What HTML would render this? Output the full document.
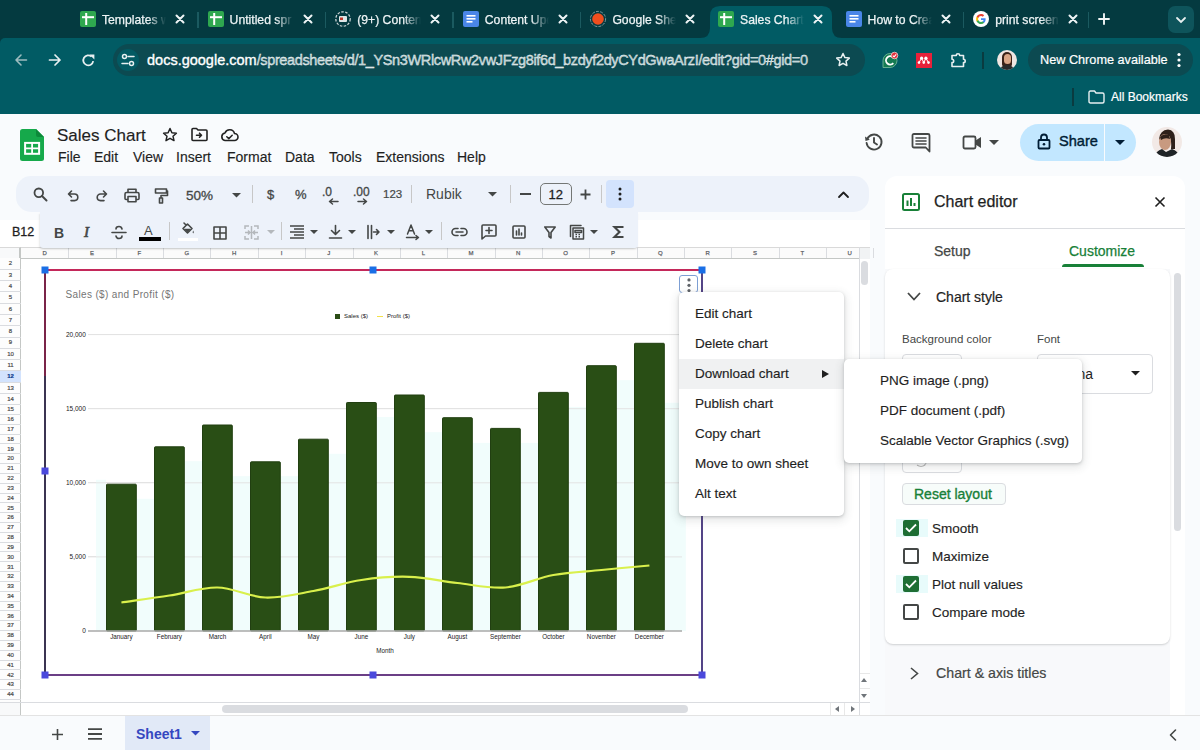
<!DOCTYPE html>
<html><head><meta charset="utf-8">
<style>
*{box-sizing:border-box;margin:0;padding:0}
html,body{width:1200px;height:750px;overflow:hidden;background:#f9fbfd;font-family:"Liberation Sans",sans-serif;}
body{position:relative}
.a{position:absolute}
.t{position:absolute;white-space:nowrap;line-height:1}
svg{position:absolute;overflow:visible}
#tabbar{left:0;top:0;width:1200px;height:50px;background:#043a40}
#toolbar{left:0;top:38px;width:1200px;height:76px;background:#015b64;border-top-left-radius:5px}
.tab{position:absolute;top:0;height:38px;width:128px}
.tab .lbl{position:absolute;left:32px;top:12.5px;font-size:12.2px;color:#eef4f5;width:64px;-webkit-text-stroke:0.25px #eef4f5;overflow:hidden;white-space:nowrap;
 -webkit-mask-image:linear-gradient(90deg,#000 72%,transparent 100%)}
.tab .ic{left:10px;top:11px;width:16px;height:16px}
.tab .cl{left:104px;top:13px;width:12px;height:12px}
.sep{position:absolute;top:12px;width:1.5px;height:16px;background:#1b5a60}
.ico{stroke:#e8f0f1;fill:none;stroke-width:1.8;stroke-linecap:round;stroke-linejoin:round}
.gi{stroke:#444746;fill:none;stroke-width:1.7;stroke-linecap:round;stroke-linejoin:round}
.menu{position:absolute;top:150px;font-size:14px;color:#1f1f1f;line-height:1;-webkit-text-stroke:0.15px #1f1f1f}
</style></head>
<body>
<div id="tabbar" class="a"></div>
<!-- active tab shape -->
<svg style="left:700px;top:6px;width:142px;height:32px" viewBox="0 0 142 32"><path d="M0 32 Q10 32 10 22 L10 10 Q10 0 20 0 L122 0 Q132 0 132 10 L132 22 Q132 32 142 32 Z" fill="#015b64"/></svg>
<div class="tab" style="left:70.0px">
<svg class="ic" viewBox="0 0 16 16"><rect x="0" y="0" width="16" height="16" rx="2" fill="#2fa84f"/><rect x="5.2" y="2" width="2" height="12" fill="#fff"/><rect x="2" y="5.2" width="12" height="2" fill="#fff"/></svg>
<div class="lbl">Templates w</div>
<svg class="cl" viewBox="0 0 12 12"><path d="M2.5 2.5L9.5 9.5M9.5 2.5L2.5 9.5" stroke="#eef4f5" stroke-width="2" stroke-linecap="round"/></svg>
</div>
<div class="sep" style="left:197.0px"></div>
<div class="tab" style="left:197.6px">
<svg class="ic" viewBox="0 0 16 16"><rect x="0" y="0" width="16" height="16" rx="2" fill="#2fa84f"/><rect x="5.2" y="2" width="2" height="12" fill="#fff"/><rect x="2" y="5.2" width="12" height="2" fill="#fff"/></svg>
<div class="lbl">Untitled spr</div>
<svg class="cl" viewBox="0 0 12 12"><path d="M2.5 2.5L9.5 9.5M9.5 2.5L2.5 9.5" stroke="#eef4f5" stroke-width="2" stroke-linecap="round"/></svg>
</div>
<div class="sep" style="left:324.6px"></div>
<div class="tab" style="left:325.2px">
<svg class="ic" viewBox="0 0 16 16"><circle cx="8" cy="8" r="7.2" fill="none" stroke="#c9d3d4" stroke-width="1.3" stroke-dasharray="2.5 1.5"/><rect x="4" y="5" width="8" height="6" rx="1" fill="#dfe6e7"/><rect x="5" y="6.5" width="3" height="2.5" fill="#c0392b"/></svg>
<div class="lbl">(9+) Content</div>
<svg class="cl" viewBox="0 0 12 12"><path d="M2.5 2.5L9.5 9.5M9.5 2.5L2.5 9.5" stroke="#eef4f5" stroke-width="2" stroke-linecap="round"/></svg>
</div>
<div class="sep" style="left:452.2px"></div>
<div class="tab" style="left:452.8px">
<svg class="ic" viewBox="0 0 16 16"><rect x="0" y="0" width="16" height="16" rx="2" fill="#4a86e8"/><rect x="3.5" y="4" width="9" height="1.6" fill="#fff"/><rect x="3.5" y="7" width="9" height="1.6" fill="#fff"/><rect x="3.5" y="10" width="6" height="1.6" fill="#fff"/></svg>
<div class="lbl">Content Upd</div>
<svg class="cl" viewBox="0 0 12 12"><path d="M2.5 2.5L9.5 9.5M9.5 2.5L2.5 9.5" stroke="#eef4f5" stroke-width="2" stroke-linecap="round"/></svg>
</div>
<div class="sep" style="left:579.8px"></div>
<div class="tab" style="left:580.4px">
<svg class="ic" viewBox="0 0 16 16"><circle cx="8" cy="8" r="7.6" fill="none" stroke="#8aa3a6" stroke-width="0.9" stroke-dasharray="3 1.2"/><circle cx="8" cy="8" r="5.8" fill="#f04e1e"/></svg>
<div class="lbl">Google Shee</div>
<svg class="cl" viewBox="0 0 12 12"><path d="M2.5 2.5L9.5 9.5M9.5 2.5L2.5 9.5" stroke="#eef4f5" stroke-width="2" stroke-linecap="round"/></svg>
</div>
<div class="tab" style="left:708.0px">
<svg class="ic" viewBox="0 0 16 16"><rect x="0" y="0" width="16" height="16" rx="2" fill="#2fa84f"/><rect x="5.2" y="2" width="2" height="12" fill="#fff"/><rect x="2" y="5.2" width="12" height="2" fill="#fff"/></svg>
<div class="lbl">Sales Chart</div>
<svg class="cl" viewBox="0 0 12 12"><path d="M2.5 2.5L9.5 9.5M9.5 2.5L2.5 9.5" stroke="#eef4f5" stroke-width="2" stroke-linecap="round"/></svg>
</div>
<div class="tab" style="left:835.6px">
<svg class="ic" viewBox="0 0 16 16"><rect x="0" y="0" width="16" height="16" rx="2" fill="#4a86e8"/><rect x="3.5" y="4" width="9" height="1.6" fill="#fff"/><rect x="3.5" y="7" width="9" height="1.6" fill="#fff"/><rect x="3.5" y="10" width="6" height="1.6" fill="#fff"/></svg>
<div class="lbl">How to Crea</div>
<svg class="cl" viewBox="0 0 12 12"><path d="M2.5 2.5L9.5 9.5M9.5 2.5L2.5 9.5" stroke="#eef4f5" stroke-width="2" stroke-linecap="round"/></svg>
</div>
<div class="sep" style="left:962.6px"></div>
<div class="tab" style="left:963.2px">
<svg class="ic" viewBox="0 0 16 16"><circle cx="8" cy="8" r="8" fill="#fff"/><path d="M12.6 8.2c0-.4 0-.7-.1-1H8v1.9h2.6c-.1.6-.5 1.2-1 1.5v1.2h1.6c1-.9 1.4-2.2 1.4-3.6z" fill="#4285f4"/><path d="M8 13c1.3 0 2.4-.4 3.2-1.2l-1.6-1.2c-.4.3-1 .5-1.6.5-1.3 0-2.3-.8-2.7-2H3.7v1.3C4.5 11.9 6.1 13 8 13z" fill="#34a853"/><path d="M5.3 9.1c-.1-.3-.2-.7-.2-1.1s.1-.7.2-1.1V5.6H3.7C3.3 6.3 3.1 7.1 3.1 8s.2 1.7.6 2.4l1.6-1.3z" fill="#fbbc05"/><path d="M8 5c.7 0 1.3.2 1.8.7l1.4-1.4C10.4 3.5 9.3 3 8 3 6.1 3 4.5 4.1 3.7 5.6l1.6 1.3C5.7 5.8 6.7 5 8 5z" fill="#ea4335"/></svg>
<div class="lbl">print screen</div>
<svg class="cl" viewBox="0 0 12 12"><path d="M2.5 2.5L9.5 9.5M9.5 2.5L2.5 9.5" stroke="#eef4f5" stroke-width="2" stroke-linecap="round"/></svg>
</div>
<div class="sep" style="left:1087.5px"></div>
<svg style="left:1098px;top:13px;width:12px;height:12px" viewBox="0 0 12 12"><path d="M6 1V11M1 6H11" stroke="#f0f5f5" stroke-width="1.9" stroke-linecap="round"/></svg>
<div class="a" style="left:1168px;top:6px;width:26px;height:27px;border-radius:7px;background:#0e545b"></div>
<svg style="left:1175px;top:16px;width:12px;height:8px" viewBox="0 0 12 8"><path d="M2 2L6 6L10 2" stroke="#e8f0f1" stroke-width="1.8" fill="none" stroke-linecap="round"/></svg>

<div id="toolbar" class="a"></div>
<!-- nav icons -->
<svg style="left:15px;top:54px;width:12px;height:12px" viewBox="0 0 12 12"><path class="ico" style="stroke:#9dbcbf;stroke-width:1.6" d="M11.5 6H1M6 1L1 6L6 11"/></svg>
<svg style="left:48.5px;top:54px;width:12px;height:12px" viewBox="0 0 12 12"><path class="ico" style="stroke-width:1.7" d="M0.5 6H11M6 1L11 6L6 11"/></svg>
<svg style="left:82px;top:54px;width:13px;height:13px" viewBox="0 0 13 13"><path class="ico" style="stroke-width:1.8;stroke-linecap:butt" d="M11.2 7.2A5 5 0 1 1 9.6 2.6"/><path d="M7.4 0.6H12.4V5.6Z" fill="#e8f0f1"/></svg>
<!-- address bar -->
<div class="a" style="left:113px;top:44px;width:752px;height:32px;border-radius:16px;background:#0c4a51"></div>
<div class="a" style="left:117px;top:49px;width:22px;height:22px;border-radius:11px;background:#035a63"></div>
<svg style="left:121px;top:53px;width:14px;height:14px" viewBox="0 0 14 14"><circle cx="3.5" cy="3.5" r="2" class="ico" style="stroke-width:1.5"/><path d="M7 3.5H13" class="ico" style="stroke-width:1.5"/><circle cx="10.5" cy="10.5" r="2" class="ico" style="stroke-width:1.5"/><path d="M1 10.5H7" class="ico" style="stroke-width:1.5"/></svg>
<div class="t" style="left:147px;top:53px;font-size:14.5px;color:#ffffff;-webkit-text-stroke:0.35px #fff">docs.google.com<span style="color:#a9c3c6;letter-spacing:-0.36px">/spreadsheets/d/1_YSn3WRlcwRw2vwJFzg8if6d_bzdyf2dyCYdGwaArzI/edit?gid=0#gid=0</span></div>
<svg style="left:835px;top:52px;width:16px;height:16px" viewBox="0 0 16 16"><path class="ico" style="stroke-width:1.5" d="M8 1.5L9.9 5.6L14.3 6.1L11 9.1L11.9 13.5L8 11.3L4.1 13.5L5 9.1L1.7 6.1L6.1 5.6Z"/></svg>
<!-- extension icons -->
<svg style="left:881px;top:51px;width:18px;height:18px" viewBox="0 0 18 18"><path d="M9 2.5A7 7 0 0 1 9 16.5H2V9.5A7 7 0 0 1 9 2.5Z" fill="#157a52" stroke="#6fb596" stroke-width="0.9"/><path d="M12 6.2A4.2 4.2 0 1 0 12.3 12.2" fill="none" stroke="#fff" stroke-width="1.9"/><circle cx="13.5" cy="4.5" r="3.3" fill="#e22f3d" stroke="#f6d0d3" stroke-width="0.8"/><path d="M11.8 4.6L13.1 5.8L15.2 3.4" stroke="#fff" stroke-width="1.1" fill="none"/></svg>
<div class="a" style="left:916px;top:52.5px;width:15.5px;height:15px;background:#e8213a"></div>
<svg style="left:916px;top:52.5px;width:15.5px;height:15px" viewBox="0 0 15.5 15"><circle cx="5.6" cy="5.2" r="1.6" fill="#fff"/><circle cx="9.9" cy="5.2" r="1.6" fill="#fff"/><circle cx="3" cy="9.6" r="1.3" fill="#fff"/><circle cx="7.75" cy="9.6" r="1.3" fill="#fff"/><circle cx="12.5" cy="9.6" r="1.3" fill="#fff"/><path d="M3 9.6L5.6 5.2L7.75 9.6L9.9 5.2L12.5 9.6" stroke="#fff" stroke-width="1" fill="none"/></svg>
<svg style="left:950px;top:51.5px;width:16px;height:16px" viewBox="0 0 16 16"><path class="ico" style="stroke-width:1.6" d="M2 3.5H6.3A1.7 1.7 0 0 1 9.7 3.5H13.5V7.2A1.7 1.7 0 0 1 13.5 10.6V14.5H2V10.6A1.7 1.7 0 0 0 2 7.2Z"/></svg>
<div class="a" style="left:982px;top:52px;width:1.5px;height:17px;background:#0a3b40"></div>
<div class="a" style="left:997px;top:50px;width:20px;height:20px;border-radius:10px;overflow:hidden;background:#efe6e2">
 <div class="a" style="left:5px;top:2px;width:10px;height:15px;border-radius:5px 5px 3px 3px;background:#3a2218"></div>
 <div class="a" style="left:6.5px;top:4px;width:7px;height:10px;border-radius:4px;background:#d9a585"></div>
 <div class="a" style="left:3px;top:15px;width:14px;height:8px;border-radius:6px 6px 0 0;background:#2a2a2a"></div>
</div>
<div class="a" style="left:1028px;top:44px;width:165px;height:32px;border-radius:16px;background:#0c4a51"></div>
<div class="t" style="left:1040px;top:54px;font-size:12.7px;color:#fff;-webkit-text-stroke:0.2px #fff">New Chrome available</div>
<svg style="left:1176px;top:52px;width:6px;height:16px" viewBox="0 0 6 16"><circle cx="3" cy="2.5" r="1.6" fill="#fff"/><circle cx="3" cy="8" r="1.6" fill="#fff"/><circle cx="3" cy="13.5" r="1.6" fill="#fff"/></svg>
<!-- bookmarks -->
<div class="a" style="left:1072px;top:88px;width:1.5px;height:18px;background:#0a3b40"></div>
<svg style="left:1088px;top:90px;width:17px;height:14px" viewBox="0 0 17 14"><path d="M1 2.5Q1 1 2.5 1H6.5L8 3H14.5Q16 3 16 4.5V11.5Q16 13 14.5 13H2.5Q1 13 1 11.5Z" class="ico" style="stroke-width:1.4"/></svg>
<div class="t" style="left:1111px;top:91px;font-size:12px;color:#fff;-webkit-text-stroke:0.2px #fff">All Bookmarks</div>

<!-- ===== Sheets header ===== -->
<svg style="left:20px;top:129px;width:24px;height:32px" viewBox="0 0 24 32"><path d="M2.5 0H16L24 8V29.5Q24 32 21.5 32H2.5Q0 32 0 29.5V2.5Q0 0 2.5 0Z" fill="#16a94b"/><path d="M16 0L24 8H18Q16 8 16 6Z" fill="#0c8a3a"/><rect x="5.1" y="13.9" width="14" height="10.9" fill="none" stroke="#fff" stroke-width="2"/><path d="M5 19.35H19M12.1 14V24.8" stroke="#fff" stroke-width="1.8"/></svg>
<div class="t" style="left:57px;top:126.5px;font-size:17px;color:#1f1f1f;-webkit-text-stroke:0.15px #1f1f1f">Sales Chart</div>
<svg style="left:161px;top:126px;width:18px;height:18px" viewBox="0 0 18 18"><path class="gi" style="stroke-width:1.5;stroke:#222" d="M9 2.5L10.9 6.8L15.4 7.2L12 10.2L13 14.6L9 12.3L5 14.6L6 10.2L2.6 7.2L7.1 6.8Z"/></svg>
<svg style="left:191px;top:127px;width:17px;height:15px" viewBox="0 0 17 15"><path class="gi" style="stroke-width:1.6;stroke:#222" d="M1 2.5Q1 1.5 2 1.5H5.5L7 3H15Q16 3 16 4V12.5Q16 13.5 15 13.5H2Q1 13.5 1 12.5Z"/><path class="gi" style="stroke-width:1.6;stroke:#222" d="M5.5 8.2H10.5M8.5 6.2L10.5 8.2L8.5 10.2"/></svg>
<svg style="left:220px;top:128px;width:19px;height:14px" viewBox="0 0 19 14"><path class="gi" style="stroke-width:1.6;stroke:#222" d="M5 12.5H14.5A3.5 3.5 0 0 0 14.5 5.5A5 5 0 0 0 5 5A3.8 3.8 0 0 0 5 12.5Z"/><path class="gi" style="stroke-width:1.5;stroke:#222" d="M6.8 8.8L8.8 10.6L12.2 7.2"/></svg>
<div class="menu" style="left:58px">File</div>
<div class="menu" style="left:94px">Edit</div>
<div class="menu" style="left:133px">View</div>
<div class="menu" style="left:176px">Insert</div>
<div class="menu" style="left:227px">Format</div>
<div class="menu" style="left:285px">Data</div>
<div class="menu" style="left:329px">Tools</div>
<div class="menu" style="left:376px">Extensions</div>
<div class="menu" style="left:457px">Help</div>

<svg style="left:864px;top:132px;width:20px;height:20px" viewBox="0 0 20 20"><path class="gi" style="stroke-width:1.9" d="M3.2 7A7.5 7.5 0 1 1 2.6 11"/><path d="M1 4.5L1.5 9L5.8 7.8Z" fill="#444746"/><path class="gi" style="stroke-width:1.9" d="M10 6V10.5L13 12.5"/></svg>
<svg style="left:911px;top:133px;width:20px;height:20px" viewBox="0 0 20 20"><path class="gi" style="stroke-width:1.8" d="M3 1H17Q18.5 1 18.5 2.5V18.5L14.8 14.5H3Q1.5 14.5 1.5 13V2.5Q1.5 1 3 1Z"/><path class="gi" style="stroke-width:1.6" d="M5 5H15M5 8H15M5 11H15"/></svg>
<svg style="left:962px;top:135px;width:20px;height:15px" viewBox="0 0 20 15"><path class="gi" style="stroke-width:1.8" d="M1.5 3Q1.5 1.5 3 1.5H12Q13.5 1.5 13.5 3V12Q13.5 13.5 12 13.5H3Q1.5 13.5 1.5 12Z"/><path d="M13.5 5.5L19 2V13L13.5 9.5Z" fill="#444746"/></svg>
<svg style="left:989px;top:140px;width:10px;height:5px" viewBox="0 0 10 5"><path d="M0 0H10L5 5Z" fill="#444746"/></svg>
<div class="a" style="left:1020px;top:124px;width:116px;height:37px;border-radius:18.5px;background:#c2e7ff"></div>
<div class="a" style="left:1104px;top:124px;width:1px;height:37px;background:#f9fbfd"></div>
<svg style="left:1037px;top:133px;width:14px;height:17px" viewBox="0 0 14 17"><rect x="1.5" y="7" width="11" height="8.5" rx="1" fill="none" stroke="#001d35" stroke-width="1.8"/><path d="M4 7V4.5A3 3 0 0 1 10 4.5V7" fill="none" stroke="#001d35" stroke-width="1.8"/><circle cx="7" cy="11.2" r="1.3" fill="#001d35"/></svg>
<div class="t" style="left:1059px;top:134px;font-size:14.6px;color:#001d35;-webkit-text-stroke:0.4px #001d35">Share</div>
<svg style="left:1115px;top:140px;width:10px;height:5px" viewBox="0 0 10 5"><path d="M0 0H10L5 5Z" fill="#001d35"/></svg>
<svg style="left:1152px;top:127px;width:30px;height:30px" viewBox="0 0 30 30"><defs><clipPath id="av"><circle cx="15" cy="15" r="15"/></clipPath></defs><g clip-path="url(#av)"><rect width="30" height="30" fill="#f2e9e6"/><path d="M7 12Q8 3 16 2.5Q23 3 23 12V22H19Q20 14 17 9Q12 8 8 13Z" fill="#2e201a"/><ellipse cx="13" cy="15" rx="6" ry="8" fill="#c89a80"/><path d="M8 10Q12 6 17 8L18 12Q13 10 9 13Z" fill="#2e201a"/><path d="M2 30Q4 24 10 22L14 25L20 22Q26 24 28 30Z" fill="#1f2326"/></g></svg>

<!-- ===== Main toolbar ===== -->
<div class="a" style="left:16px;top:176px;width:853px;height:36px;border-radius:15px;background:#edf2fa"></div>
<svg style="left:33px;top:187px;width:15px;height:15px" viewBox="0 0 15 15"><circle cx="5.8" cy="5.8" r="4.3" class="gi" style="stroke-width:1.8"/><path d="M9 9L13.5 13.5" class="gi" style="stroke-width:2"/></svg>
<svg style="left:66px;top:189px;width:13px;height:13px" viewBox="0 0 13 13"><path class="gi" style="stroke-width:1.6" d="M3.5 5H8.5A3.3 3.3 0 0 1 8.5 11.6H5M5.5 2L2.5 5L5.5 8"/></svg>
<svg style="left:96px;top:189px;width:13px;height:13px" viewBox="0 0 13 13"><path class="gi" style="stroke-width:1.6" d="M9.5 5H4.5A3.3 3.3 0 0 0 4.5 11.6H8M7.5 2L10.5 5L7.5 8"/></svg>
<svg style="left:124px;top:188px;width:16px;height:15px" viewBox="0 0 16 15"><path class="gi" style="stroke-width:1.6" d="M4 4.5V1.2H12V4.5M4 11.5H2Q1 11.5 1 10.5V6Q1 4.5 2.5 4.5H13.5Q15 4.5 15 6V10.5Q15 11.5 14 11.5H12M4 8.5H12V13.8H4Z"/></svg>
<svg style="left:154px;top:188px;width:14px;height:16px" viewBox="0 0 14 16"><path class="gi" style="stroke-width:1.6" d="M1.5 1H12.5V5H1.5ZM12.5 3H13.5V7.5H7V10M5.5 10H8.5V15H5.5Z"/></svg>
<div class="t" style="left:186px;top:189px;font-size:13.5px;color:#444746;-webkit-text-stroke:0.3px #444746">50%</div>
<svg style="left:232px;top:193px;width:9px;height:5px" viewBox="0 0 9 5"><path d="M0 0H9L4.5 4.5Z" fill="#444746"/></svg>
<div class="a" style="left:252px;top:185px;width:1px;height:18px;background:#c7c7c7"></div>
<div class="t" style="left:267px;top:188px;font-size:13px;color:#444746;-webkit-text-stroke:0.3px #444746">$</div>
<div class="t" style="left:295px;top:188px;font-size:13px;color:#444746;-webkit-text-stroke:0.3px #444746">%</div>
<div class="t" style="left:322px;top:186px;font-size:12px;color:#444746;-webkit-text-stroke:0.3px #444746">.0</div>
<svg style="left:328px;top:198px;width:11px;height:7px" viewBox="0 0 11 7"><path d="M10 3.5H2M4.5 1L1.5 3.5L4.5 6" class="gi" style="stroke-width:1.5"/></svg>
<div class="t" style="left:353px;top:186px;font-size:12px;color:#444746;-webkit-text-stroke:0.3px #444746">.00</div>
<svg style="left:357px;top:198px;width:11px;height:7px" viewBox="0 0 11 7"><path d="M1 3.5H9M6.5 1L9.5 3.5L6.5 6" class="gi" style="stroke-width:1.5"/></svg>
<div class="t" style="left:383px;top:189px;font-size:11.5px;color:#444746;-webkit-text-stroke:0.2px #444746">123</div>
<div class="a" style="left:411px;top:185px;width:1px;height:18px;background:#c7c7c7"></div>
<div class="t" style="left:426px;top:187px;font-size:14px;color:#444746">Rubik</div>
<svg style="left:488px;top:192px;width:9px;height:5px" viewBox="0 0 9 5"><path d="M0 0H9L4.5 4.5Z" fill="#444746"/></svg>
<div class="a" style="left:510px;top:185px;width:1px;height:18px;background:#c7c7c7"></div>
<div class="a" style="left:520px;top:193px;width:11px;height:1.8px;background:#444746"></div>
<div class="a" style="left:540px;top:183px;width:32px;height:22px;border:1px solid #747775;border-radius:5px"></div>
<div class="t" style="left:548.5px;top:188px;font-size:13px;color:#1f1f1f;-webkit-text-stroke:0.3px #1f1f1f">12</div>
<svg style="left:580px;top:189px;width:11px;height:11px" viewBox="0 0 11 11"><path d="M5.5 0.5V10.5M0.5 5.5H10.5" stroke="#444746" stroke-width="1.8"/></svg>
<div class="a" style="left:601px;top:185px;width:1px;height:18px;background:#c7c7c7"></div>
<div class="a" style="left:606px;top:180px;width:28px;height:28px;border-radius:4px;background:#d3e3fd"></div>
<svg style="left:618px;top:187px;width:4px;height:14px" viewBox="0 0 4 14"><circle cx="2" cy="2" r="1.5" fill="#1f1f1f"/><circle cx="2" cy="7" r="1.5" fill="#1f1f1f"/><circle cx="2" cy="12" r="1.5" fill="#1f1f1f"/></svg>
<svg style="left:838px;top:191px;width:11px;height:7px" viewBox="0 0 11 7"><path d="M1 6L5.5 1.5L10 6" class="gi" style="stroke-width:1.8;stroke:#1f1f1f"/></svg>

<!-- formula bar strip -->
<div class="a" style="left:0;top:220px;width:870px;height:27px;background:#fff"></div>
<div class="t" style="left:12px;top:226px;font-size:12.5px;color:#1f1f1f;-webkit-text-stroke:0.3px #1f1f1f">B12</div>

<div class="a" style="left:0;top:247px;width:870px;height:468px;background:#fff"></div>
<div class="a" style="left:0;top:247px;width:870px;height:12px;background:#fbfbfb;border-top:1px solid #d9d9d9;border-bottom:1px solid #c4c7c5"></div>
<div class="a" style="left:0;top:247px;width:21px;height:12px;background:#f8f9fa;border-top:1px solid #d9d9d9;border-bottom:1px solid #c4c7c5;border-right:2px solid #c4c7c5"></div>
<div class="a" style="left:68.3px;top:248px;width:1px;height:10px;background:#dadce0"></div>
<div class="t" style="left:21.0px;top:249.5px;width:47.4px;text-align:center;font-size:6px;color:#5f6368;-webkit-text-stroke:0.25px #5f6368">D</div>
<div class="a" style="left:115.7px;top:248px;width:1px;height:10px;background:#dadce0"></div>
<div class="t" style="left:68.3px;top:249.5px;width:47.4px;text-align:center;font-size:6px;color:#5f6368;-webkit-text-stroke:0.25px #5f6368">E</div>
<div class="a" style="left:163.1px;top:248px;width:1px;height:10px;background:#dadce0"></div>
<div class="t" style="left:115.7px;top:249.5px;width:47.4px;text-align:center;font-size:6px;color:#5f6368;-webkit-text-stroke:0.25px #5f6368">F</div>
<div class="a" style="left:210.4px;top:248px;width:1px;height:10px;background:#dadce0"></div>
<div class="t" style="left:163.1px;top:249.5px;width:47.4px;text-align:center;font-size:6px;color:#5f6368;-webkit-text-stroke:0.25px #5f6368">G</div>
<div class="a" style="left:257.8px;top:248px;width:1px;height:10px;background:#dadce0"></div>
<div class="t" style="left:210.4px;top:249.5px;width:47.4px;text-align:center;font-size:6px;color:#5f6368;-webkit-text-stroke:0.25px #5f6368">H</div>
<div class="a" style="left:305.1px;top:248px;width:1px;height:10px;background:#dadce0"></div>
<div class="t" style="left:257.8px;top:249.5px;width:47.4px;text-align:center;font-size:6px;color:#5f6368;-webkit-text-stroke:0.25px #5f6368">I</div>
<div class="a" style="left:352.5px;top:248px;width:1px;height:10px;background:#dadce0"></div>
<div class="t" style="left:305.1px;top:249.5px;width:47.4px;text-align:center;font-size:6px;color:#5f6368;-webkit-text-stroke:0.25px #5f6368">J</div>
<div class="a" style="left:399.8px;top:248px;width:1px;height:10px;background:#dadce0"></div>
<div class="t" style="left:352.4px;top:249.5px;width:47.4px;text-align:center;font-size:6px;color:#5f6368;-webkit-text-stroke:0.25px #5f6368">K</div>
<div class="a" style="left:447.2px;top:248px;width:1px;height:10px;background:#dadce0"></div>
<div class="t" style="left:399.8px;top:249.5px;width:47.4px;text-align:center;font-size:6px;color:#5f6368;-webkit-text-stroke:0.25px #5f6368">L</div>
<div class="a" style="left:494.5px;top:248px;width:1px;height:10px;background:#dadce0"></div>
<div class="t" style="left:447.2px;top:249.5px;width:47.4px;text-align:center;font-size:6px;color:#5f6368;-webkit-text-stroke:0.25px #5f6368">M</div>
<div class="a" style="left:541.9px;top:248px;width:1px;height:10px;background:#dadce0"></div>
<div class="t" style="left:494.5px;top:249.5px;width:47.4px;text-align:center;font-size:6px;color:#5f6368;-webkit-text-stroke:0.25px #5f6368">N</div>
<div class="a" style="left:589.2px;top:248px;width:1px;height:10px;background:#dadce0"></div>
<div class="t" style="left:541.9px;top:249.5px;width:47.4px;text-align:center;font-size:6px;color:#5f6368;-webkit-text-stroke:0.25px #5f6368">O</div>
<div class="a" style="left:636.6px;top:248px;width:1px;height:10px;background:#dadce0"></div>
<div class="t" style="left:589.2px;top:249.5px;width:47.4px;text-align:center;font-size:6px;color:#5f6368;-webkit-text-stroke:0.25px #5f6368">P</div>
<div class="a" style="left:683.9px;top:248px;width:1px;height:10px;background:#dadce0"></div>
<div class="t" style="left:636.6px;top:249.5px;width:47.4px;text-align:center;font-size:6px;color:#5f6368;-webkit-text-stroke:0.25px #5f6368">Q</div>
<div class="a" style="left:731.2px;top:248px;width:1px;height:10px;background:#dadce0"></div>
<div class="t" style="left:683.9px;top:249.5px;width:47.4px;text-align:center;font-size:6px;color:#5f6368;-webkit-text-stroke:0.25px #5f6368">R</div>
<div class="a" style="left:778.6px;top:248px;width:1px;height:10px;background:#dadce0"></div>
<div class="t" style="left:731.2px;top:249.5px;width:47.4px;text-align:center;font-size:6px;color:#5f6368;-webkit-text-stroke:0.25px #5f6368">S</div>
<div class="a" style="left:826.0px;top:248px;width:1px;height:10px;background:#dadce0"></div>
<div class="t" style="left:778.6px;top:249.5px;width:47.4px;text-align:center;font-size:6px;color:#5f6368;-webkit-text-stroke:0.25px #5f6368">T</div>
<div class="a" style="left:873.3px;top:248px;width:1px;height:10px;background:#dadce0"></div>
<div class="t" style="left:826.0px;top:249.5px;width:47.4px;text-align:center;font-size:6px;color:#5f6368;-webkit-text-stroke:0.25px #5f6368">U</div>
<div class="a" style="left:0;top:258px;width:21px;height:445px;background:#fdfdfd;border-right:1px solid #c4c7c5"></div>
<div class="a" style="left:0;top:268.8px;width:21px;height:1px;background:#dadce0"></div>
<div class="t" style="left:0;top:260.4px;width:21px;text-align:center;font-size:6px;font-weight:normal;color:#4a4a4a;-webkit-text-stroke:0.2px #4a4a4a">2</div>
<div class="a" style="left:0;top:280.1px;width:21px;height:1px;background:#dadce0"></div>
<div class="t" style="left:0;top:271.7px;width:21px;text-align:center;font-size:6px;font-weight:normal;color:#4a4a4a;-webkit-text-stroke:0.2px #4a4a4a">3</div>
<div class="a" style="left:0;top:291.3px;width:21px;height:1px;background:#dadce0"></div>
<div class="t" style="left:0;top:283.0px;width:21px;text-align:center;font-size:6px;font-weight:normal;color:#4a4a4a;-webkit-text-stroke:0.2px #4a4a4a">4</div>
<div class="a" style="left:0;top:302.6px;width:21px;height:1px;background:#dadce0"></div>
<div class="t" style="left:0;top:294.3px;width:21px;text-align:center;font-size:6px;font-weight:normal;color:#4a4a4a;-webkit-text-stroke:0.2px #4a4a4a">5</div>
<div class="a" style="left:0;top:313.9px;width:21px;height:1px;background:#dadce0"></div>
<div class="t" style="left:0;top:305.6px;width:21px;text-align:center;font-size:6px;font-weight:normal;color:#4a4a4a;-webkit-text-stroke:0.2px #4a4a4a">6</div>
<div class="a" style="left:0;top:325.2px;width:21px;height:1px;background:#dadce0"></div>
<div class="t" style="left:0;top:316.8px;width:21px;text-align:center;font-size:6px;font-weight:normal;color:#4a4a4a;-webkit-text-stroke:0.2px #4a4a4a">7</div>
<div class="a" style="left:0;top:336.5px;width:21px;height:1px;background:#dadce0"></div>
<div class="t" style="left:0;top:328.1px;width:21px;text-align:center;font-size:6px;font-weight:normal;color:#4a4a4a;-webkit-text-stroke:0.2px #4a4a4a">8</div>
<div class="a" style="left:0;top:347.7px;width:21px;height:1px;background:#dadce0"></div>
<div class="t" style="left:0;top:339.4px;width:21px;text-align:center;font-size:6px;font-weight:normal;color:#4a4a4a;-webkit-text-stroke:0.2px #4a4a4a">9</div>
<div class="a" style="left:0;top:359.0px;width:21px;height:1px;background:#dadce0"></div>
<div class="t" style="left:0;top:350.7px;width:21px;text-align:center;font-size:6px;font-weight:normal;color:#4a4a4a;-webkit-text-stroke:0.2px #4a4a4a">10</div>
<div class="a" style="left:0;top:370.3px;width:21px;height:1px;background:#dadce0"></div>
<div class="t" style="left:0;top:362.0px;width:21px;text-align:center;font-size:6px;font-weight:normal;color:#4a4a4a;-webkit-text-stroke:0.2px #4a4a4a">11</div>
<div class="a" style="left:0;top:370.8px;width:21px;height:11.3px;background:#d3e3fd"></div>
<div class="a" style="left:0;top:381.6px;width:21px;height:1px;background:#dadce0"></div>
<div class="t" style="left:0;top:373.2px;width:21px;text-align:center;font-size:6px;font-weight:bold;color:#0b3a8c;-webkit-text-stroke:0.2px #0b3a8c">12</div>
<div class="a" style="left:0;top:392.9px;width:21px;height:1px;background:#dadce0"></div>
<div class="t" style="left:0;top:384.5px;width:21px;text-align:center;font-size:6px;font-weight:normal;color:#4a4a4a;-webkit-text-stroke:0.2px #4a4a4a">13</div>
<div class="a" style="left:0;top:404.1px;width:21px;height:1px;background:#dadce0"></div>
<div class="t" style="left:0;top:395.8px;width:21px;text-align:center;font-size:6px;font-weight:normal;color:#4a4a4a;-webkit-text-stroke:0.2px #4a4a4a">14</div>
<div class="a" style="left:0;top:414.0px;width:21px;height:1px;background:#dadce0"></div>
<div class="t" style="left:0;top:406.3px;width:21px;text-align:center;font-size:6px;font-weight:normal;color:#4a4a4a;-webkit-text-stroke:0.2px #4a4a4a">15</div>
<div class="a" style="left:0;top:423.8px;width:21px;height:1px;background:#dadce0"></div>
<div class="t" style="left:0;top:416.2px;width:21px;text-align:center;font-size:6px;font-weight:normal;color:#4a4a4a;-webkit-text-stroke:0.2px #4a4a4a">16</div>
<div class="a" style="left:0;top:433.6px;width:21px;height:1px;background:#dadce0"></div>
<div class="t" style="left:0;top:426.0px;width:21px;text-align:center;font-size:6px;font-weight:normal;color:#4a4a4a;-webkit-text-stroke:0.2px #4a4a4a">17</div>
<div class="a" style="left:0;top:443.4px;width:21px;height:1px;background:#dadce0"></div>
<div class="t" style="left:0;top:435.8px;width:21px;text-align:center;font-size:6px;font-weight:normal;color:#4a4a4a;-webkit-text-stroke:0.2px #4a4a4a">18</div>
<div class="a" style="left:0;top:453.2px;width:21px;height:1px;background:#dadce0"></div>
<div class="t" style="left:0;top:445.6px;width:21px;text-align:center;font-size:6px;font-weight:normal;color:#4a4a4a;-webkit-text-stroke:0.2px #4a4a4a">19</div>
<div class="a" style="left:0;top:463.1px;width:21px;height:1px;background:#dadce0"></div>
<div class="t" style="left:0;top:455.4px;width:21px;text-align:center;font-size:6px;font-weight:normal;color:#4a4a4a;-webkit-text-stroke:0.2px #4a4a4a">20</div>
<div class="a" style="left:0;top:472.9px;width:21px;height:1px;background:#dadce0"></div>
<div class="t" style="left:0;top:465.3px;width:21px;text-align:center;font-size:6px;font-weight:normal;color:#4a4a4a;-webkit-text-stroke:0.2px #4a4a4a">21</div>
<div class="a" style="left:0;top:482.7px;width:21px;height:1px;background:#dadce0"></div>
<div class="t" style="left:0;top:475.1px;width:21px;text-align:center;font-size:6px;font-weight:normal;color:#4a4a4a;-webkit-text-stroke:0.2px #4a4a4a">22</div>
<div class="a" style="left:0;top:492.5px;width:21px;height:1px;background:#dadce0"></div>
<div class="t" style="left:0;top:484.9px;width:21px;text-align:center;font-size:6px;font-weight:normal;color:#4a4a4a;-webkit-text-stroke:0.2px #4a4a4a">23</div>
<div class="a" style="left:0;top:502.3px;width:21px;height:1px;background:#dadce0"></div>
<div class="t" style="left:0;top:494.7px;width:21px;text-align:center;font-size:6px;font-weight:normal;color:#4a4a4a;-webkit-text-stroke:0.2px #4a4a4a">24</div>
<div class="a" style="left:0;top:512.2px;width:21px;height:1px;background:#dadce0"></div>
<div class="t" style="left:0;top:504.5px;width:21px;text-align:center;font-size:6px;font-weight:normal;color:#4a4a4a;-webkit-text-stroke:0.2px #4a4a4a">25</div>
<div class="a" style="left:0;top:522.0px;width:21px;height:1px;background:#dadce0"></div>
<div class="t" style="left:0;top:514.4px;width:21px;text-align:center;font-size:6px;font-weight:normal;color:#4a4a4a;-webkit-text-stroke:0.2px #4a4a4a">26</div>
<div class="a" style="left:0;top:531.8px;width:21px;height:1px;background:#dadce0"></div>
<div class="t" style="left:0;top:524.2px;width:21px;text-align:center;font-size:6px;font-weight:normal;color:#4a4a4a;-webkit-text-stroke:0.2px #4a4a4a">27</div>
<div class="a" style="left:0;top:541.6px;width:21px;height:1px;background:#dadce0"></div>
<div class="t" style="left:0;top:534.0px;width:21px;text-align:center;font-size:6px;font-weight:normal;color:#4a4a4a;-webkit-text-stroke:0.2px #4a4a4a">28</div>
<div class="a" style="left:0;top:551.4px;width:21px;height:1px;background:#dadce0"></div>
<div class="t" style="left:0;top:543.8px;width:21px;text-align:center;font-size:6px;font-weight:normal;color:#4a4a4a;-webkit-text-stroke:0.2px #4a4a4a">29</div>
<div class="a" style="left:0;top:561.3px;width:21px;height:1px;background:#dadce0"></div>
<div class="t" style="left:0;top:553.6px;width:21px;text-align:center;font-size:6px;font-weight:normal;color:#4a4a4a;-webkit-text-stroke:0.2px #4a4a4a">30</div>
<div class="a" style="left:0;top:571.1px;width:21px;height:1px;background:#dadce0"></div>
<div class="t" style="left:0;top:563.5px;width:21px;text-align:center;font-size:6px;font-weight:normal;color:#4a4a4a;-webkit-text-stroke:0.2px #4a4a4a">31</div>
<div class="a" style="left:0;top:580.9px;width:21px;height:1px;background:#dadce0"></div>
<div class="t" style="left:0;top:573.3px;width:21px;text-align:center;font-size:6px;font-weight:normal;color:#4a4a4a;-webkit-text-stroke:0.2px #4a4a4a">32</div>
<div class="a" style="left:0;top:590.7px;width:21px;height:1px;background:#dadce0"></div>
<div class="t" style="left:0;top:583.1px;width:21px;text-align:center;font-size:6px;font-weight:normal;color:#4a4a4a;-webkit-text-stroke:0.2px #4a4a4a">33</div>
<div class="a" style="left:0;top:600.5px;width:21px;height:1px;background:#dadce0"></div>
<div class="t" style="left:0;top:592.9px;width:21px;text-align:center;font-size:6px;font-weight:normal;color:#4a4a4a;-webkit-text-stroke:0.2px #4a4a4a">34</div>
<div class="a" style="left:0;top:610.4px;width:21px;height:1px;background:#dadce0"></div>
<div class="t" style="left:0;top:602.8px;width:21px;text-align:center;font-size:6px;font-weight:normal;color:#4a4a4a;-webkit-text-stroke:0.2px #4a4a4a">35</div>
<div class="a" style="left:0;top:620.2px;width:21px;height:1px;background:#dadce0"></div>
<div class="t" style="left:0;top:612.6px;width:21px;text-align:center;font-size:6px;font-weight:normal;color:#4a4a4a;-webkit-text-stroke:0.2px #4a4a4a">36</div>
<div class="a" style="left:0;top:630.0px;width:21px;height:1px;background:#dadce0"></div>
<div class="t" style="left:0;top:622.4px;width:21px;text-align:center;font-size:6px;font-weight:normal;color:#4a4a4a;-webkit-text-stroke:0.2px #4a4a4a">37</div>
<div class="a" style="left:0;top:639.8px;width:21px;height:1px;background:#dadce0"></div>
<div class="t" style="left:0;top:632.2px;width:21px;text-align:center;font-size:6px;font-weight:normal;color:#4a4a4a;-webkit-text-stroke:0.2px #4a4a4a">38</div>
<div class="a" style="left:0;top:649.6px;width:21px;height:1px;background:#dadce0"></div>
<div class="t" style="left:0;top:642.0px;width:21px;text-align:center;font-size:6px;font-weight:normal;color:#4a4a4a;-webkit-text-stroke:0.2px #4a4a4a">39</div>
<div class="a" style="left:0;top:659.5px;width:21px;height:1px;background:#dadce0"></div>
<div class="t" style="left:0;top:651.9px;width:21px;text-align:center;font-size:6px;font-weight:normal;color:#4a4a4a;-webkit-text-stroke:0.2px #4a4a4a">40</div>
<div class="a" style="left:0;top:669.3px;width:21px;height:1px;background:#dadce0"></div>
<div class="t" style="left:0;top:661.7px;width:21px;text-align:center;font-size:6px;font-weight:normal;color:#4a4a4a;-webkit-text-stroke:0.2px #4a4a4a">41</div>
<div class="a" style="left:0;top:679.1px;width:21px;height:1px;background:#dadce0"></div>
<div class="t" style="left:0;top:671.5px;width:21px;text-align:center;font-size:6px;font-weight:normal;color:#4a4a4a;-webkit-text-stroke:0.2px #4a4a4a">42</div>
<div class="a" style="left:0;top:688.9px;width:21px;height:1px;background:#dadce0"></div>
<div class="t" style="left:0;top:681.3px;width:21px;text-align:center;font-size:6px;font-weight:normal;color:#4a4a4a;-webkit-text-stroke:0.2px #4a4a4a">43</div>
<div class="a" style="left:0;top:698.7px;width:21px;height:1px;background:#dadce0"></div>
<div class="t" style="left:0;top:691.1px;width:21px;text-align:center;font-size:6px;font-weight:normal;color:#4a4a4a;-webkit-text-stroke:0.2px #4a4a4a">44</div>
<div class="a" style="left:0;top:708.6px;width:21px;height:1px;background:#dadce0"></div>
<div class="t" style="left:0;top:701.0px;width:21px;text-align:center;font-size:6px;font-weight:normal;color:#4a4a4a;-webkit-text-stroke:0.2px #4a4a4a">45</div>
<div class="a" style="left:0;top:702px;width:870px;height:13px;background:#fff;border-top:1px solid #dadce0"></div>
<div class="a" style="left:0;top:703px;width:21px;height:12px;background:#f8f9fa;border-right:1px solid #c4c7c5"></div>
<div class="a" style="left:859px;top:247px;width:1px;height:468px;background:#dadce0"></div>
<div class="a" style="left:860px;top:248px;width:10px;height:11px;background:#f1f3f4"></div>
<div class="a" style="left:861px;top:260.5px;width:7px;height:24px;border-radius:3.5px;background:#dadce0"></div>
<div class="a" style="left:222px;top:705px;width:466px;height:8px;border-radius:4px;background:#dadce0"></div>
<div class="a" style="left:830px;top:703px;width:29px;height:12px;border-left:1px solid #e8e8e8"></div>
<div class="a" style="left:844px;top:703px;width:1px;height:12px;background:#e8e8e8"></div>
<svg style="left:835px;top:706px;width:4px;height:6px" viewBox="0 0 4 6"><path d="M4 0V6L0 3Z" fill="#70757a"/></svg>
<svg style="left:851px;top:706px;width:4px;height:6px" viewBox="0 0 4 6"><path d="M0 0V6L4 3Z" fill="#70757a"/></svg>
<svg style="left:861px;top:678px;width:6px;height:4px" viewBox="0 0 6 4"><path d="M0 4H6L3 0Z" fill="#70757a"/></svg>
<svg style="left:861px;top:694px;width:6px;height:4px" viewBox="0 0 6 4"><path d="M0 0H6L3 4Z" fill="#70757a"/></svg>
<div class="a" style="left:860px;top:673px;width:10px;height:1px;background:#e8e8e8"></div>
<div class="a" style="left:860px;top:688px;width:10px;height:1px;background:#e8e8e8"></div>
<div class="a" style="left:45px;top:270px;width:657px;height:405px;background:#fff"></div>
<div class="t" style="left:65.5px;top:289.5px;font-size:10px;letter-spacing:0.35px;color:#757575">Sales ($) and Profit ($)</div>
<div class="a" style="left:334.5px;top:313.5px;width:5.5px;height:5.5px;background:#2b4d16"></div>
<div class="t" style="left:344px;top:313px;font-size:6px;color:#222">Sales ($)</div>
<div class="a" style="left:377px;top:315.5px;width:6px;height:1.5px;background:#f3e24a"></div>
<div class="t" style="left:387px;top:313px;font-size:6px;color:#222">Profit ($)</div>
<div class="t" style="left:40px;top:628.2px;width:45.8px;text-align:right;font-size:6.5px;color:#222">0</div>
<div class="a" style="left:88px;top:556.4px;width:594px;height:1px;background:#e3e3e3"></div>
<div class="t" style="left:40px;top:554.1px;width:45.8px;text-align:right;font-size:6.5px;color:#222">5,000</div>
<div class="a" style="left:88px;top:482.3px;width:594px;height:1px;background:#e3e3e3"></div>
<div class="t" style="left:40px;top:480.0px;width:45.8px;text-align:right;font-size:6.5px;color:#222">10,000</div>
<div class="a" style="left:88px;top:408.2px;width:594px;height:1px;background:#e3e3e3"></div>
<div class="t" style="left:40px;top:405.9px;width:45.8px;text-align:right;font-size:6.5px;color:#222">15,000</div>
<div class="a" style="left:88px;top:334.1px;width:594px;height:1px;background:#e3e3e3"></div>
<div class="t" style="left:40px;top:331.8px;width:45.8px;text-align:right;font-size:6.5px;color:#222">20,000</div>
<svg style="left:0;top:0;width:1200px;height:750px" viewBox="0 0 1200 750">
<rect x="96" y="479.8" width="10" height="151.2" fill="#f1fdfc"/>
<rect x="136.8" y="498.8" width="17.2" height="132.2" fill="#f1fdfc"/>
<rect x="184.8" y="461.2" width="17.2" height="169.8" fill="#f1fdfc"/>
<rect x="232.8" y="476.2" width="17.2" height="154.8" fill="#f1fdfc"/>
<rect x="280.8" y="476.2" width="17.2" height="154.8" fill="#f1fdfc"/>
<rect x="328.8" y="453.8" width="17.2" height="177.2" fill="#f1fdfc"/>
<rect x="376.8" y="417.0" width="17.2" height="214.0" fill="#f1fdfc"/>
<rect x="424.8" y="432.2" width="17.2" height="198.8" fill="#f1fdfc"/>
<rect x="472.8" y="442.9" width="17.2" height="188.1" fill="#f1fdfc"/>
<rect x="520.8" y="442.9" width="17.2" height="188.1" fill="#f1fdfc"/>
<rect x="568.8" y="406.9" width="17.2" height="224.1" fill="#f1fdfc"/>
<rect x="616.8" y="380.2" width="17.2" height="250.8" fill="#f1fdfc"/>
<rect x="664.8" y="402.8" width="21" height="228.2" fill="#f1fdfc"/>
<line x1="88" y1="556.9" x2="682" y2="556.9" stroke="#e3e3e3" stroke-width="1"/>
<line x1="88" y1="482.8" x2="682" y2="482.8" stroke="#e3e3e3" stroke-width="1"/>
<line x1="88" y1="408.7" x2="682" y2="408.7" stroke="#e3e3e3" stroke-width="1"/>
<line x1="88" y1="334.6" x2="682" y2="334.6" stroke="#e3e3e3" stroke-width="1"/>
<rect x="106.5" y="484.2" width="29.8" height="146.8" fill="#294e15" stroke="#213f11" stroke-width="1" rx="0.8"/>
<rect x="154.5" y="446.8" width="29.8" height="184.2" fill="#294e15" stroke="#213f11" stroke-width="1" rx="0.8"/>
<rect x="202.5" y="425.0" width="29.8" height="206.0" fill="#294e15" stroke="#213f11" stroke-width="1" rx="0.8"/>
<rect x="250.5" y="461.8" width="29.8" height="169.2" fill="#294e15" stroke="#213f11" stroke-width="1" rx="0.8"/>
<rect x="298.5" y="439.2" width="29.8" height="191.8" fill="#294e15" stroke="#213f11" stroke-width="1" rx="0.8"/>
<rect x="346.5" y="402.5" width="29.8" height="228.5" fill="#294e15" stroke="#213f11" stroke-width="1" rx="0.8"/>
<rect x="394.5" y="395.0" width="29.8" height="236.0" fill="#294e15" stroke="#213f11" stroke-width="1" rx="0.8"/>
<rect x="442.5" y="417.7" width="29.8" height="213.3" fill="#294e15" stroke="#213f11" stroke-width="1" rx="0.8"/>
<rect x="490.5" y="428.4" width="29.8" height="202.6" fill="#294e15" stroke="#213f11" stroke-width="1" rx="0.8"/>
<rect x="538.5" y="392.4" width="29.8" height="238.6" fill="#294e15" stroke="#213f11" stroke-width="1" rx="0.8"/>
<rect x="586.5" y="365.7" width="29.8" height="265.3" fill="#294e15" stroke="#213f11" stroke-width="1" rx="0.8"/>
<rect x="634.5" y="343.3" width="29.8" height="287.7" fill="#294e15" stroke="#213f11" stroke-width="1" rx="0.8"/>
<line x1="88" y1="631.0" x2="682" y2="631.0" stroke="#a8a8a8" stroke-width="1.5"/>
<path d="M121.4,602.5 C129.4,601.3 153.4,598.0 169.4,595.5 C185.4,593.0 201.4,587.2 217.4,587.5 C233.4,587.8 249.4,596.9 265.4,597.5 C281.4,598.1 297.4,593.9 313.4,591 C329.4,588.1 345.4,582.4 361.4,580 C377.4,577.6 393.4,576.3 409.4,576.8 C425.4,577.3 441.4,581.2 457.4,583 C473.4,584.8 489.4,588.8 505.4,587.5 C521.4,586.2 537.4,577.9 553.4,575 C569.4,572.1 585.4,571.6 601.4,570 C617.4,568.4 641.4,566.2 649.4,565.5" fill="none" stroke="#d9f04c" stroke-width="2.2"/>
<line x1="45" y1="270" x2="702" y2="270" stroke="#c4285a" stroke-width="2"/>
<line x1="45" y1="270" x2="45" y2="376" stroke="#7a2448" stroke-width="2"/>
<line x1="45" y1="376" x2="45" y2="675" stroke="#3b3452" stroke-width="2"/>
<line x1="702" y1="270" x2="702" y2="675" stroke="#41307a" stroke-width="1.8"/>
<line x1="45" y1="675" x2="702" y2="675" stroke="#6b3f86" stroke-width="2"/>
<rect x="41.5" y="266.5" width="7" height="7" fill="#1a6fe6"/>
<rect x="369.5" y="266.5" width="7" height="7" fill="#1a6fe6"/>
<rect x="698.5" y="266.5" width="7" height="7" fill="#1a6fe6"/>
<rect x="41.5" y="467.5" width="7" height="7" fill="#4b49dc"/>
<rect x="41.5" y="671.5" width="7" height="7" fill="#4b49dc"/>
<rect x="369.5" y="671.5" width="7" height="7" fill="#4b49dc"/>
<rect x="698.5" y="671.5" width="7" height="7" fill="#4b49dc"/>
</svg>
<div class="t" style="left:91.4px;top:634px;width:60px;text-align:center;font-size:6.3px;color:#222">January</div>
<div class="t" style="left:139.4px;top:634px;width:60px;text-align:center;font-size:6.3px;color:#222">February</div>
<div class="t" style="left:187.4px;top:634px;width:60px;text-align:center;font-size:6.3px;color:#222">March</div>
<div class="t" style="left:235.4px;top:634px;width:60px;text-align:center;font-size:6.3px;color:#222">April</div>
<div class="t" style="left:283.4px;top:634px;width:60px;text-align:center;font-size:6.3px;color:#222">May</div>
<div class="t" style="left:331.4px;top:634px;width:60px;text-align:center;font-size:6.3px;color:#222">June</div>
<div class="t" style="left:379.4px;top:634px;width:60px;text-align:center;font-size:6.3px;color:#222">July</div>
<div class="t" style="left:427.4px;top:634px;width:60px;text-align:center;font-size:6.3px;color:#222">August</div>
<div class="t" style="left:475.4px;top:634px;width:60px;text-align:center;font-size:6.3px;color:#222">September</div>
<div class="t" style="left:523.4px;top:634px;width:60px;text-align:center;font-size:6.3px;color:#222">October</div>
<div class="t" style="left:571.4px;top:634px;width:60px;text-align:center;font-size:6.3px;color:#222">November</div>
<div class="t" style="left:619.4px;top:634px;width:60px;text-align:center;font-size:6.3px;color:#222">December</div>
<div class="t" style="left:355px;top:648px;width:60px;text-align:center;font-size:6.3px;color:#222">Month</div>
<div class="a" style="left:679px;top:275px;width:19px;height:18px;border:1.5px solid #7d9fd4;border-radius:3px;background:#fff"></div>
<svg style="left:686.5px;top:278px;width:4px;height:14px" viewBox="0 0 4 14"><circle cx="2" cy="1.9" r="1.6" fill="#5f6368"/><circle cx="2" cy="7.3" r="1.6" fill="#5f6368"/><circle cx="2" cy="12.6" r="1.6" fill="#5f6368"/></svg>

<!-- ===== overlay toolbar ===== -->
<div class="a" style="left:40px;top:211px;width:598px;height:37px;background:#edf2fa;border-radius:0 0 3px 3px;box-shadow:0 2px 2px -1px rgba(60,64,67,.2),-2px 2px 2px -1px rgba(60,64,67,.1)"></div>
<div class="t" style="left:54px;top:226px;font-size:14px;font-weight:bold;color:#444746">B</div>
<div class="t" style="left:84px;top:225px;font-size:15px;font-style:italic;color:#444746;font-family:'Liberation Serif',serif;-webkit-text-stroke:0.6px #444746">I</div>
<svg style="left:111px;top:225px;width:16px;height:15px" viewBox="0 0 16 15"><path class="gi" style="stroke-width:1.6" d="M1 7.5H15M11 4Q10.5 1.5 8 1.5Q5 1.5 5 4M5 11Q5.5 13.5 8 13.5Q11 13.5 11 11"/></svg>
<div class="t" style="left:144px;top:224px;font-size:13px;color:#444746">A</div>
<div class="a" style="left:139px;top:237px;width:22px;height:3.5px;background:#000"></div>
<div class="a" style="left:169px;top:222px;width:1px;height:18px;background:#c7c7c7"></div>
<svg style="left:180px;top:222px;width:15px;height:14px" viewBox="0 0 15 14"><path d="M4 1L6 3M3 6.5L7.5 2L12 6.5L7.5 11Z" class="gi" style="stroke-width:1.6"/><path d="M4 6.8H11L7.5 10.3Z" fill="#444746"/><path d="M13.2 8.5Q14.5 10.5 13.2 11.5Q12 10.5 13.2 8.5Z" fill="#444746"/></svg>
<div class="a" style="left:178px;top:238px;width:20px;height:3px;background:#fff"></div>
<svg style="left:213px;top:226px;width:14px;height:14px" viewBox="0 0 14 14"><path class="gi" style="stroke-width:1.6" d="M1 1H13V13H1ZM7 1V13M1 7H13"/></svg>
<svg style="left:244px;top:225px;width:15px;height:15px" viewBox="0 0 15 15"><path style="stroke:#b4b8bc;fill:none;stroke-width:1.5" d="M1 4V1H5M10 1H14V4M1 11V14H5M10 14H14V11M1 7.5H6M4 5.5L6 7.5L4 9.5M14 7.5H9M11 5.5L9 7.5L11 9.5M7.5 1V14" stroke-dasharray="0"/></svg>
<svg style="left:267px;top:230px;width:8px;height:4px" viewBox="0 0 8 4"><path d="M0 0H8L4 4Z" fill="#b4b8bc"/></svg>
<div class="a" style="left:281px;top:222px;width:1px;height:18px;background:#c7c7c7"></div>
<svg style="left:290px;top:225px;width:14px;height:14px" viewBox="0 0 14 14"><path class="gi" style="stroke-width:1.5;stroke-linecap:butt" d="M0 1H14M4 4H14M0 7H14M4 10H14M0 13H14"/></svg>
<svg style="left:310px;top:230px;width:8px;height:4px" viewBox="0 0 8 4"><path d="M0 0H8L4 4Z" fill="#444746"/></svg>
<svg style="left:329px;top:225px;width:13px;height:14px" viewBox="0 0 13 14"><path class="gi" style="stroke-width:1.6" d="M6.5 0.5V9M2.5 5.5L6.5 9.5L10.5 5.5M0.5 13H12.5"/></svg>
<svg style="left:348px;top:230px;width:8px;height:4px" viewBox="0 0 8 4"><path d="M0 0H8L4 4Z" fill="#444746"/></svg>
<svg style="left:367px;top:225px;width:13px;height:14px" viewBox="0 0 13 14"><path class="gi" style="stroke-width:1.6" d="M1 0.5V13.5M4.5 0.5V13.5M6.5 7H12M9.5 4.5L12 7L9.5 9.5" stroke-dasharray="0"/></svg>
<svg style="left:387px;top:230px;width:8px;height:4px" viewBox="0 0 8 4"><path d="M0 0H8L4 4Z" fill="#444746"/></svg>
<svg style="left:406px;top:224px;width:14px;height:16px" viewBox="0 0 14 16"><path class="gi" style="stroke-width:1.5" d="M1.5 10L5 1L8.5 10M2.8 6.8H7.2M0.5 13.5H12M10 11.5L12.5 13.5L10 15.5"/></svg>
<svg style="left:425px;top:230px;width:8px;height:4px" viewBox="0 0 8 4"><path d="M0 0H8L4 4Z" fill="#444746"/></svg>
<div class="a" style="left:441px;top:222px;width:1px;height:18px;background:#c7c7c7"></div>
<svg style="left:451px;top:227px;width:17px;height:10px" viewBox="0 0 17 10"><path class="gi" style="stroke-width:1.6" d="M7 1.5H4.5A3.5 3.5 0 0 0 4.5 8.5H7M10 1.5H12.5A3.5 3.5 0 0 1 12.5 8.5H10M5 5H12"/></svg>
<svg style="left:481px;top:224px;width:16px;height:16px" viewBox="0 0 16 16"><path class="gi" style="stroke-width:1.6" d="M1 2Q1 1 2 1H14Q15 1 15 2V11Q15 12 14 12H4.5L1 15ZM8 3.5V9.5M5 6.5H11"/></svg>
<svg style="left:512px;top:225px;width:14px;height:14px" viewBox="0 0 14 14"><path class="gi" style="stroke-width:1.6" d="M2 1H12Q13 1 13 2V12Q13 13 12 13H2Q1 13 1 12V2Q1 1 2 1ZM4.5 6V10M7 4V10M9.5 8V10"/></svg>
<svg style="left:544px;top:226px;width:12px;height:13px" viewBox="0 0 12 13"><path class="gi" style="stroke-width:1.6" d="M0.8 1H11.2L7 6.5V12L5 10.5V6.5Z"/></svg>
<svg style="left:569px;top:224px;width:16px;height:16px" viewBox="0 0 16 16"><path class="gi" style="stroke-width:1.5" d="M4 4H14.5V15H4ZM1.5 1.5V12.5M1.5 1.5H12M6 6.5H12.5V8.5H6Z"/><path d="M6.5 10.5H8M9.5 10.5H11M6.5 12.8H8M9.5 12.8H11" stroke="#444746" stroke-width="1.5"/></svg>
<svg style="left:590px;top:230px;width:8px;height:4px" viewBox="0 0 8 4"><path d="M0 0H8L4 4Z" fill="#444746"/></svg>
<svg style="left:613px;top:225px;width:11px;height:14px" viewBox="0 0 11 14"><path class="gi" style="stroke-width:2.1;stroke-linecap:butt;stroke-linejoin:miter" d="M10.5 2H1.5L6.5 7L1.5 12H10.5"/></svg>

<!-- chart editor panel -->
<div class="a" style="left:885px;top:176px;width:300px;height:539px;background:#fff;border-radius:12px 12px 0 0"></div>
<svg style="left:902px;top:193px;width:18px;height:18px" viewBox="0 0 18 18"><rect x="1" y="1" width="16" height="16" rx="1.5" fill="none" stroke="#188038" stroke-width="2"/><path d="M5.5 7.5V13M9 5V13M12.5 10V13" stroke="#188038" stroke-width="2"/></svg>
<div class="t" style="left:934px;top:194px;font-size:16px;color:#1f1f1f;-webkit-text-stroke:0.25px #1f1f1f">Chart editor</div>
<svg style="left:1154.5px;top:197px;width:10px;height:10px" viewBox="0 0 10 10"><path d="M0.5 0.5L9.5 9.5M9.5 0.5L0.5 9.5" stroke="#1f1f1f" stroke-width="1.6"/></svg>
<div class="a" style="left:885px;top:228px;width:300px;height:1px;background:#dadce0"></div>
<div class="t" style="left:934px;top:244px;font-size:14px;color:#444746;-webkit-text-stroke:0.25px #444746">Setup</div>
<div class="t" style="left:1069px;top:244px;font-size:14px;color:#188038;-webkit-text-stroke:0.25px #188038">Customize</div>
<div class="a" style="left:1062px;top:263.5px;width:82px;height:3px;border-radius:3px 3px 0 0;background:#188038"></div>
<!-- content area -->
<div class="a" style="left:885px;top:269px;width:285px;height:446px;background:#f8f9fb"></div>
<div class="a" style="left:885px;top:269px;width:285px;height:375px;background:#fff;border-radius:8px;box-shadow:0 1px 2px rgba(60,64,67,.22)"></div>
<div class="a" style="left:1174px;top:273px;width:7px;height:258px;border-radius:3.5px;background:#dadce0"></div>
<svg style="left:907px;top:292px;width:14px;height:9px" viewBox="0 0 14 9"><path d="M1 1L7 7.5L13 1" fill="none" stroke="#444746" stroke-width="1.8"/></svg>
<div class="t" style="left:936px;top:290px;font-size:14px;color:#1f1f1f;-webkit-text-stroke:0.2px #1f1f1f">Chart style</div>
<div class="t" style="left:902px;top:334px;font-size:11.5px;color:#444746">Background color</div>
<div class="t" style="left:1037px;top:334px;font-size:11.5px;color:#444746">Font</div>
<div class="a" style="left:902px;top:354px;width:60px;height:40px;border:1px solid #dadce0;border-radius:4px"></div>
<div class="a" style="left:1037px;top:354px;width:116px;height:40px;border:1px solid #dadce0;border-radius:4px"></div>
<div class="t" style="left:1041px;top:367px;font-size:14px;color:#1f1f1f">Verdana</div>
<svg style="left:1131px;top:371px;width:9px;height:5px" viewBox="0 0 9 5"><path d="M0 0H9L4.5 4.5Z" fill="#1f1f1f"/></svg>
<div class="a" style="left:902px;top:432px;width:60px;height:41px;border:1px solid #dadce0;border-radius:4px"></div>
<div class="a" style="left:915px;top:455px;width:12px;height:12px;border-radius:6px;border:1.5px solid #bbb;border-top-color:transparent;border-left-color:transparent"></div>
<div class="a" style="left:902px;top:483px;width:104px;height:22px;border:1px solid #dadce0;border-radius:4px;background:#f7fcfa"></div>
<div class="t" style="left:914px;top:487px;font-size:14px;color:#188038;-webkit-text-stroke:0.35px #188038">Reset layout</div>
<!-- checkboxes -->
<div class="a" style="left:896px;top:519px;width:32px;height:18px;background:#e8fbfb"></div>
<div class="a" style="left:903px;top:520px;width:16px;height:16px;border-radius:2px;background:#1e6e34"></div>
<svg style="left:905px;top:523px;width:12px;height:10px" viewBox="0 0 12 10"><path d="M1 5L4.3 8.3L11 1.5" fill="none" stroke="#fff" stroke-width="1.8"/></svg>
<div class="t" style="left:932px;top:522px;font-size:13.5px;color:#1f1f1f;-webkit-text-stroke:0.15px #1f1f1f">Smooth</div>
<div class="a" style="left:903px;top:548px;width:16px;height:16px;border-radius:2px;border:2px solid #444746"></div>
<div class="t" style="left:932px;top:550px;font-size:13.5px;color:#1f1f1f;-webkit-text-stroke:0.15px #1f1f1f">Maximize</div>
<div class="a" style="left:896px;top:575px;width:32px;height:18px;background:#e8fbfb"></div>
<div class="a" style="left:903px;top:576px;width:16px;height:16px;border-radius:2px;background:#1e6e34"></div>
<svg style="left:905px;top:579px;width:12px;height:10px" viewBox="0 0 12 10"><path d="M1 5L4.3 8.3L11 1.5" fill="none" stroke="#fff" stroke-width="1.8"/></svg>
<div class="t" style="left:932px;top:578px;font-size:13.5px;color:#1f1f1f;-webkit-text-stroke:0.15px #1f1f1f">Plot null values</div>
<div class="a" style="left:903px;top:604px;width:16px;height:16px;border-radius:2px;border:2px solid #444746"></div>
<div class="t" style="left:932px;top:606px;font-size:13.5px;color:#1f1f1f;-webkit-text-stroke:0.15px #1f1f1f">Compare mode</div>
<svg style="left:910px;top:667px;width:9px;height:13px" viewBox="0 0 9 13"><path d="M1 1L7.5 6.5L1 12" fill="none" stroke="#444746" stroke-width="1.6"/></svg>
<div class="t" style="left:936px;top:666px;font-size:14.2px;color:#444746;-webkit-text-stroke:0.2px #444746">Chart &amp; axis titles</div>

<!-- context menu -->
<div class="a" style="left:679px;top:292px;width:165px;height:224px;background:#fff;border-radius:5px;box-shadow:0 1px 3px rgba(60,64,67,.25),0 3px 8px 2px rgba(60,64,67,.12)"></div>
<div class="a" style="left:679px;top:359px;width:165px;height:30px;background:#f0f1f2"></div>
<div class="t" style="left:695px;top:306.5px;font-size:13.5px;color:#1f1f1f;-webkit-text-stroke:0.15px #1f1f1f">Edit chart</div>
<div class="t" style="left:695px;top:336.5px;font-size:13.5px;color:#1f1f1f;-webkit-text-stroke:0.15px #1f1f1f">Delete chart</div>
<div class="t" style="left:695px;top:366.5px;font-size:13.5px;color:#1f1f1f;-webkit-text-stroke:0.15px #1f1f1f">Download chart</div>
<div class="t" style="left:695px;top:396.5px;font-size:13.5px;color:#1f1f1f;-webkit-text-stroke:0.15px #1f1f1f">Publish chart</div>
<div class="t" style="left:695px;top:426.5px;font-size:13.5px;color:#1f1f1f;-webkit-text-stroke:0.15px #1f1f1f">Copy chart</div>
<div class="t" style="left:695px;top:456.5px;font-size:13.5px;color:#1f1f1f;-webkit-text-stroke:0.15px #1f1f1f">Move to own sheet</div>
<div class="t" style="left:695px;top:486.5px;font-size:13.5px;color:#1f1f1f;-webkit-text-stroke:0.15px #1f1f1f">Alt text</div>
<svg style="left:821.5px;top:369.5px;width:7px;height:8px" viewBox="0 0 7 8"><path d="M0 0L7 4L0 8Z" fill="#1f1f1f"/></svg>
<!-- submenu -->
<div class="a" style="left:844px;top:359px;width:238px;height:104px;background:#fff;border-radius:5px;box-shadow:0 1px 3px rgba(60,64,67,.25),0 3px 8px 2px rgba(60,64,67,.12)"></div>
<div class="t" style="left:880px;top:374px;font-size:13.5px;color:#1f1f1f;-webkit-text-stroke:0.15px #1f1f1f">PNG image (.png)</div>
<div class="t" style="left:880px;top:403.5px;font-size:13.5px;color:#1f1f1f;-webkit-text-stroke:0.15px #1f1f1f">PDF document (.pdf)</div>
<div class="t" style="left:880px;top:433.5px;font-size:13.5px;color:#1f1f1f;-webkit-text-stroke:0.15px #1f1f1f">Scalable Vector Graphics (.svg)</div>


<!-- ===== bottom bar ===== -->
<div class="a" style="left:0;top:715px;width:1200px;height:35px;background:#f9fbfd;border-top:1px solid #e3e3e3"></div>
<svg style="left:52px;top:729px;width:11px;height:11px" viewBox="0 0 11 11"><path d="M5.5 0V11M0 5.5H11" stroke="#444746" stroke-width="1.6"/></svg>
<svg style="left:88px;top:728px;width:14px;height:12px" viewBox="0 0 14 12"><path d="M0 1.2H14M0 6H14M0 10.8H14" stroke="#444746" stroke-width="1.8"/></svg>
<div class="a" style="left:125px;top:716px;width:85px;height:34px;background:#e1e9f7"></div>
<div class="t" style="left:136px;top:727px;font-size:14px;font-weight:bold;color:#3447c0">Sheet1</div>
<svg style="left:191px;top:731px;width:9px;height:5px" viewBox="0 0 9 5"><path d="M0 0H9L4.5 4.5Z" fill="#3447c0"/></svg>
<svg style="left:1169px;top:729px;width:8px;height:12px" viewBox="0 0 8 12"><path d="M6.5 1L1.5 6L6.5 11" class="gi" style="stroke-width:1.6"/></svg>

</body></html>
